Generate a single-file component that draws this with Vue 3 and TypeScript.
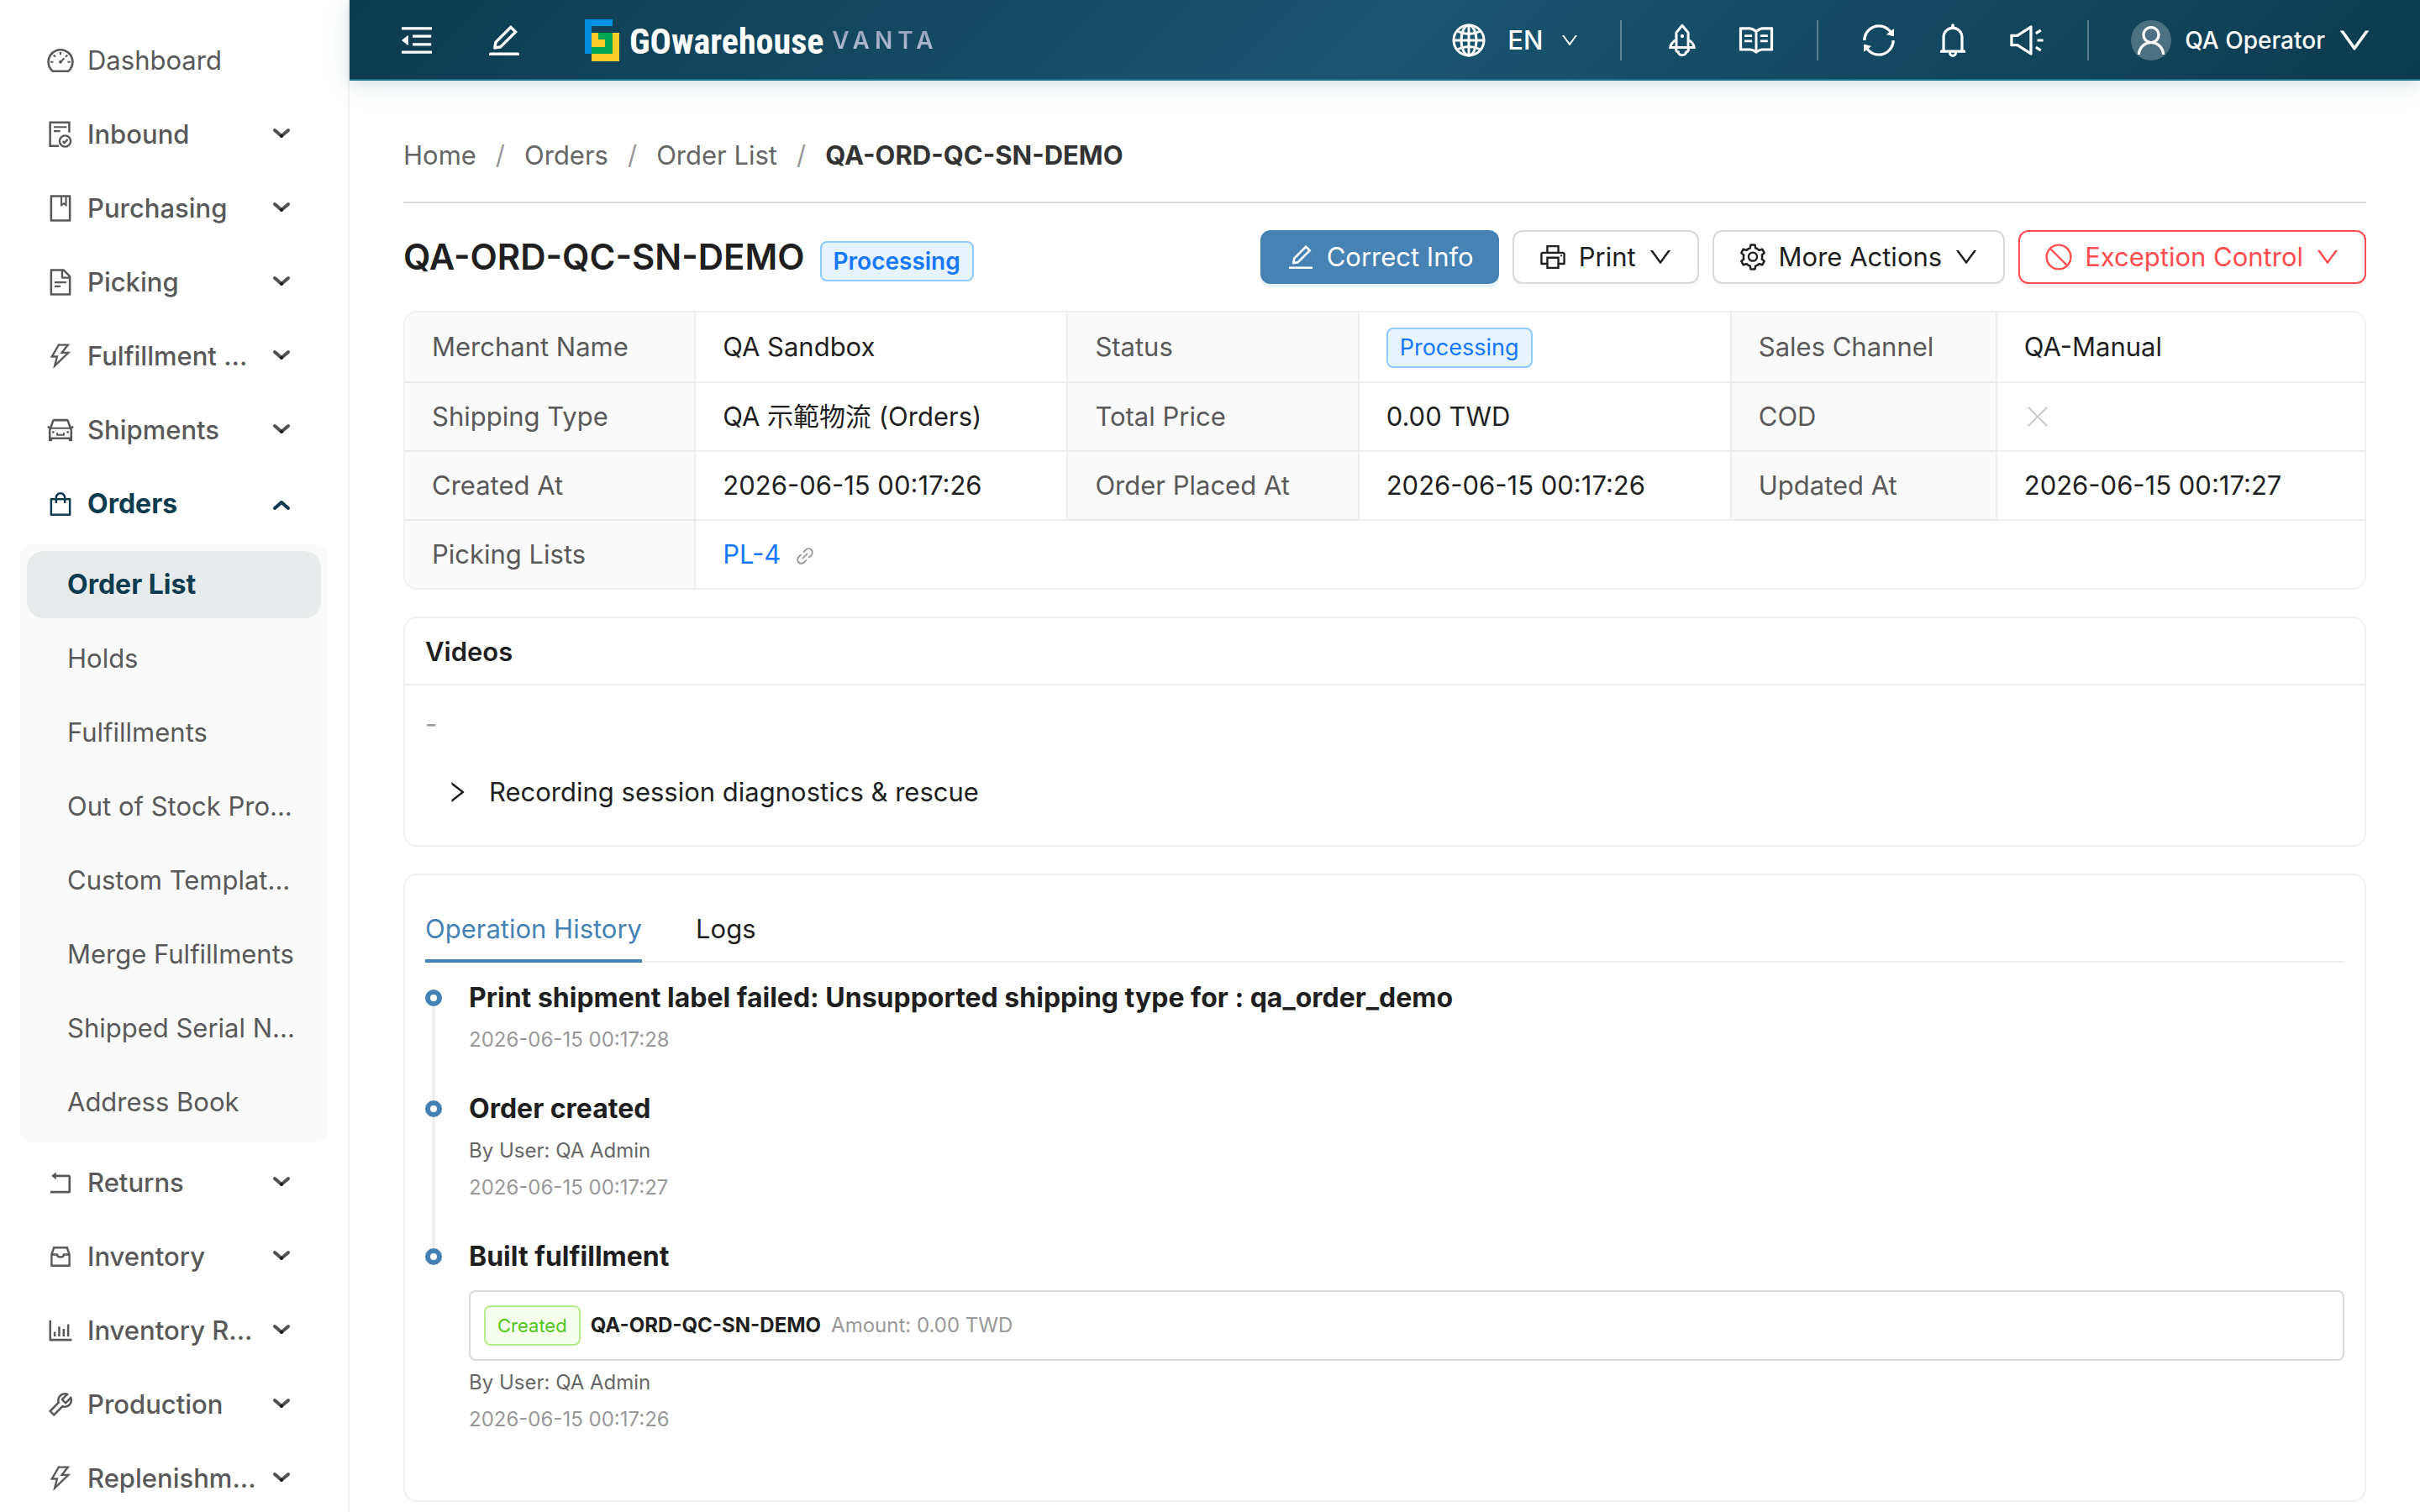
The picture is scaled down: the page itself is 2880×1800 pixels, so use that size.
<script setup lang="ts">
interface Glyph {
  fill?: string
  line?: string
}
interface MenuEntry {
  label: string
  icon: string
  children?: string[]
  leaf?: boolean
}
interface Field {
  label: string
  value: string
  kind?: 'tag' | 'cross' | 'link'
}
interface HistoryEntry {
  title: string
  user?: string
  time: string
  fulfillment?: { status: string; code: string; amount: string }
}

const glyphs: Record<string, Glyph> = {
  dashboard: { fill: 'M924.8 385.6a446.7 446.7 0 00-96-142.4 446.7 446.7 0 00-142.4-96C631.1 123.8 572.5 112 512 112s-119.1 11.8-174.4 35.2a446.7 446.7 0 00-142.4 96 446.7 446.7 0 00-96 142.4C75.8 440.9 64 499.5 64 560c0 132.7 58.3 257.7 159.9 343.1l1.7 1.4c5.8 4.8 13.1 7.5 20.6 7.5h531.7c7.5 0 14.8-2.7 20.6-7.5l1.7-1.4C901.7 817.7 960 692.7 960 560c0-60.5-11.9-119.1-35.2-174.4zM761.4 836H262.6A371.12 371.12 0 01140 560c0-99.4 38.7-192.8 109-263 70.3-70.3 163.7-109 263-109 99.4 0 192.8 38.7 263 109 70.3 70.3 109 163.7 109 263 0 105.6-44.5 205.5-122.6 276zM623.5 421.5a8.03 8.03 0 00-11.3 0L527.7 506c-18.7-5-39.4-.2-54.1 14.5a55.95 55.95 0 000 79.2 55.95 55.95 0 0079.2 0 55.87 55.87 0 0014.5-54.1l84.5-84.5c3.1-3.1 3.1-8.2 0-11.3l-28.3-28.3zM490 320h44c4.4 0 8-3.6 8-8v-80c0-4.4-3.6-8-8-8h-44c-4.4 0-8 3.6-8 8v80c0 4.4 3.6 8 8 8zm260 218v44c0 4.4 3.6 8 8 8h80c4.4 0 8-3.6 8-8v-44c0-4.4-3.6-8-8-8h-80c-4.4 0-8 3.6-8 8zm12.7-197.2l-31.1-31.1a8.03 8.03 0 00-11.3 0l-56.6 56.6a8.03 8.03 0 000 11.3l31.1 31.1c3.1 3.1 8.2 3.1 11.3 0l56.6-56.6c3.1-3.1 3.1-8.2 0-11.3zm-458.6-31.1a8.03 8.03 0 00-11.3 0l-31.1 31.1a8.03 8.03 0 000 11.3l56.6 56.6c3.1 3.1 8.2 3.1 11.3 0l31.1-31.1c3.1-3.1 3.1-8.2 0-11.3l-56.6-56.6zM262 530h-80c-4.4 0-8 3.6-8 8v44c0 4.4 3.6 8 8 8h80c4.4 0 8-3.6 8-8v-44c0-4.4-3.6-8-8-8z' },
  inbound: {
    fill: 'M282 232h440v62H282zM282 372h220v62H282zM124 71h720v380h-72V143H196v724h256v72H124z',
    line: 'M480 739a188 188 0 10376 0 188 188 0 10-376 0M588 742l56 56 112-118',
  },
  book: { fill: 'M832 64H192c-17.7 0-32 14.3-32 32v832c0 17.7 14.3 32 32 32h640c17.7 0 32-14.3 32-32V96c0-17.7-14.3-32-32-32zm-260 72h96v209.9L621.5 312 572 347.4V136zm220 752H232V136h280v296.9c0 3.3 1 6.6 3 9.3a15.9 15.9 0 0022.3 3.7l83.8-59.9 81.4 59.4c2.7 2 6 3.1 9.4 3.1 8.8 0 16-7.2 16-16V136h64v752z' },
  file: { fill: 'M854.6 288.6L639.4 73.4c-6-6-14.1-9.4-22.6-9.4H192c-17.7 0-32 14.3-32 32v832c0 17.7 14.3 32 32 32h640c17.7 0 32-14.3 32-32V311.3c0-8.5-3.4-16.7-9.4-22.7zM790.2 326H602V137.8L790.2 326zm1.8 562H232V136h302v216a42 42 0 0042 42h216v494zM504 618H320c-4.4 0-8 3.6-8 8v48c0 4.4 3.6 8 8 8h184c4.4 0 8-3.6 8-8v-48c0-4.4-3.6-8-8-8zM312 490v48c0 4.4 3.6 8 8 8h384c4.4 0 8-3.6 8-8v-48c0-4.4-3.6-8-8-8H320c-4.4 0-8 3.6-8 8z' },
  bolt: { fill: 'M848 359.3H627.7L825.8 109c4.1-5.3.4-13-6.3-13H436c-2.8 0-5.5 1.5-6.9 4L170 547.5c-3.1 5.3.7 12 6.9 12h174.4l-89.4 357.6c-1.9 7.8 7.5 13.3 13.3 7.7L853.5 373c5.2-4.9 1.7-13.7-5.5-13.7zM378.2 732.5l60.3-241H281.1l189.6-327.4h224.6L487 427.4h211L378.2 732.5z' },
  car: { fill: 'M380 704h264c4.4 0 8-3.6 8-8v-84c0-4.4-3.6-8-8-8h-40c-4.4 0-8 3.6-8 8v36H428v-36c0-4.4-3.6-8-8-8h-40c-4.4 0-8 3.6-8 8v84c0 4.4 3.6 8 8 8zm340-123a40 40 0 1080 0 40 40 0 10-80 0zm239-167.6L935.3 372a8 8 0 00-10.9-2.9l-50.7 29.6-78.3-216.2a63.9 63.9 0 00-60.9-44.4H301.2c-34.7 0-65.5 22.4-76.2 55.5l-74.6 205.2-50.8-29.6a8 8 0 00-10.9 2.9L65 413.4c-2.2 3.8-.9 8.6 2.9 10.8l60.4 35.2-14.5 40c-1.2 3.2-1.8 6.6-1.8 10v348.2c0 15.7 11.8 28.4 26.3 28.4h67.6c12.3 0 23-9.3 25.6-22.3l7.7-37.7h545.6l7.7 37.7c2.7 13 13.3 22.3 25.6 22.3h67.6c14.5 0 26.3-12.7 26.3-28.4V509.4c0-3.4-.6-6.8-1.8-10l-14.5-40 60.3-35.2a8 8 0 003-10.8zM840 517v237H184V517l15.6-43h624.8l15.6 43zM292.7 218.1l.5-1.3.4-1.3c1.1-3.3 4.1-5.5 7.6-5.5h427.6l75.4 208H220l72.7-199.9zM224 581a40 40 0 1080 0 40 40 0 10-80 0z' },
  bag: { fill: 'M832 312H696v-16c0-101.6-82.4-184-184-184s-184 82.4-184 184v16H192c-17.7 0-32 14.3-32 32v536c0 17.7 14.3 32 32 32h640c17.7 0 32-14.3 32-32V344c0-17.7-14.3-32-32-32zm-432-16c0-61.9 50.1-112 112-112s112 50.1 112 112v16H400v-16zm392 544H232V384h96v88c0 4.4 3.6 8 8 8h56c4.4 0 8-3.6 8-8v-88h224v88c0 4.4 3.6 8 8 8h56c4.4 0 8-3.6 8-8v-88h96v456z' },
  rollback: { fill: 'M793 242H366v-74c0-6.7-7.7-10.4-12.9-6.3l-142 112a8 8 0 000 12.6l142 112c5.2 4.1 12.9.4 12.9-6.3v-74h415v470H175c-4.4 0-8 3.6-8 8v60c0 4.4 3.6 8 8 8h618c35.3 0 64-28.7 64-64V306c0-35.3-28.7-64-64-64z' },
  tray: { line: 'M211 440L290 208H734L813 440V818H211ZM211 440H400C400 500 450 528 512 528S624 500 624 440H813' },
  chart: { fill: 'M888 792H200V168c0-4.4-3.6-8-8-8h-56c-4.4 0-8 3.6-8 8v688c0 4.4 3.6 8 8 8h752c4.4 0 8-3.6 8-8v-56c0-4.4-3.6-8-8-8zm-600-80h56c4.4 0 8-3.6 8-8V560c0-4.4-3.6-8-8-8h-56c-4.4 0-8 3.6-8 8v144c0 4.4 3.6 8 8 8zm152 0h56c4.4 0 8-3.6 8-8V384c0-4.4-3.6-8-8-8h-56c-4.4 0-8 3.6-8 8v320c0 4.4 3.6 8 8 8zm152 0h56c4.4 0 8-3.6 8-8V462c0-4.4-3.6-8-8-8h-56c-4.4 0-8 3.6-8 8v242c0 4.4 3.6 8 8 8zm152 0h56c4.4 0 8-3.6 8-8V304c0-4.4-3.6-8-8-8h-56c-4.4 0-8 3.6-8 8v400c0 4.4 3.6 8 8 8z' },
  tool: { fill: 'M876.6 239.5c-.5-.9-1.2-1.8-2-2.5-5-5-13.1-5-18.1 0L684.2 409.3l-67.9-67.9L788.7 169c.8-.8 1.4-1.6 2-2.5 3.6-6.1 1.6-13.9-4.5-17.5-98.2-58-226.8-44.7-311.3 39.7-67 67-89.2 162-66.5 247.4l-293 293c-3 3-2.8 7.9.3 11l169.7 169.7c3.1 3.1 8.1 3.3 11 .3l292.9-292.9c85.5 22.8 180.5.7 247.6-66.4 84.4-84.5 97.7-213.1 39.7-311.3zM786 499.8c-58.1 58.1-145.3 69.3-214.6 33.6l-8.8 8.8-.1-.1-274 274.1-79.2-79.2 230.1-230.1s0 .1.1.1l52.8-52.8c-35.7-69.3-24.5-156.5 33.6-214.6a184.2 184.2 0 01144-53.5L537 318.9a32.05 32.05 0 000 45.3l124.5 124.5a32.05 32.05 0 0045.3 0l132.8-132.8c3.7 51.8-14.4 104.8-53.6 143.9z' },
  fold: { fill: 'M408 442h480c4.4 0 8-3.6 8-8v-56c0-4.4-3.6-8-8-8H408c-4.4 0-8 3.6-8 8v56c0 4.4 3.6 8 8 8zm-8 204c0 4.4 3.6 8 8 8h480c4.4 0 8-3.6 8-8v-56c0-4.4-3.6-8-8-8H408c-4.4 0-8 3.6-8 8v56zm504-486H120c-4.4 0-8 3.6-8 8v56c0 4.4 3.6 8 8 8h784c4.4 0 8-3.6 8-8v-56c0-4.4-3.6-8-8-8zm0 632H120c-4.4 0-8 3.6-8 8v56c0 4.4 3.6 8 8 8h784c4.4 0 8-3.6 8-8v-56c0-4.4-3.6-8-8-8zM115.4 518.9L271.7 642c5.8 4.6 14.4.5 14.4-6.9V388.9c0-7.4-8.5-11.5-14.4-6.9L115.4 505.1a8.74 8.74 0 000 13.8z' },
  edit: { fill: 'M257.7 752c2 0 4-.2 6-.5L431.9 722c2-.4 3.9-1.3 5.3-2.8l423.9-423.9a9.96 9.96 0 000-14.1L694.9 114.9c-1.9-1.9-4.4-2.9-7.1-2.9s-5.2 1-7.1 2.9L256.8 538.8c-1.5 1.5-2.4 3.3-2.8 5.3l-29.5 168.2a33.5 33.5 0 009.4 29.8c6.6 6.4 14.9 9.9 23.8 9.9zm67.4-174.4L687.8 215l73.3 73.3-362.7 362.6-88.9 15.7 15.6-89zM880 836H144c-17.7 0-32 14.3-32 32v36c0 4.4 3.6 8 8 8h784c4.4 0 8-3.6 8-8v-36c0-17.7-14.3-32-32-32z' },
  down: { fill: 'M884 256h-75c-5.1 0-9.9 2.5-12.9 6.6L512 654.2 227.9 262.6c-3-4.1-7.8-6.6-12.9-6.6h-75c-6.5 0-10.3 7.4-6.5 12.7l352.6 486.1c12.8 17.6 39 17.6 51.7 0l352.6-486.1c3.9-5.3.1-12.7-6.4-12.7z' },
  right: { fill: 'M765.7 486.8L314.9 134.7A7.97 7.97 0 00302 141v77.3c0 4.9 2.3 9.6 6.1 12.6l360 281.1-360 281.1c-3.9 3-6.1 7.7-6.1 12.6V883c0 6.7 7.7 10.4 12.9 6.3l450.8-352.1a31.96 31.96 0 000-50.4z' },
  rocket: { fill: 'M864 736c0-111.6-65.4-208-160-252.9V317.3c0-15.1-5.3-29.7-15.1-41.2L536.5 95.4C530.1 87.8 521 84 512 84s-18.1 3.8-24.5 11.4L335.1 276.1a63.97 63.97 0 00-15.1 41.2v165.8C225.4 528 160 624.4 160 736h156.5c-2.3 7.2-3.5 15-3.5 23.8 0 22.1 7.6 43.7 21.4 60.8a97.2 97.2 0 0043.1 30.6c23.1 54 75.6 88.8 134.5 88.8 29.1 0 57.3-8.6 81.4-24.8 23.6-15.8 41.9-37.9 53-64a97 97 0 0043.1-30.5 97.52 97.52 0 0021.4-60.8c0-8.4-1.1-16.4-3.1-23.8H864zM762.3 621.4c9.4 14.6 17 30.3 22.5 46.6H700V558.7a211.6 211.6 0 0162.3 62.7zM388 483.1V318.8l124-147 124 147V668H388V483.1zM239.2 668c5.5-16.3 13.1-32 22.5-46.6 16.3-25.2 37.5-46.5 62.3-62.7V668h-84.8zm388.9 116.2c-5.2 3-11.2 4.2-17.1 3.4l-19.5-2.4-2.8 19.4c-5.4 37.9-38.4 66.5-76.7 66.5-38.3 0-71.3-28.6-76.7-66.5l-2.8-19.5-19.5 2.5a27.7 27.7 0 01-17.1-3.5c-8.7-5-14.1-14.3-14.1-24.4 0-10.6 5.9-19.4 14.6-23.8h231.3c8.8 4.5 14.6 13.3 14.6 23.8-.1 10.2-5.5 19.6-14.2 24.5zM464 400a48 48 0 1096 0 48 48 0 10-96 0z' },
  read: { fill: 'M928 161H699.2c-49.1 0-97.1 14.1-138.4 40.7L512 233l-48.8-31.3A255.2 255.2 0 00324.8 161H96c-17.7 0-32 14.3-32 32v568c0 17.7 14.3 32 32 32h228.8c49.1 0 97.1 14.1 138.4 40.7l44.4 28.6c1.3.8 2.8 1.3 4.3 1.3s3-.4 4.3-1.3l44.4-28.6C602 807.1 650.1 793 699.2 793H928c17.7 0 32-14.3 32-32V193c0-17.7-14.3-32-32-32zM324.8 721H136V233h188.8c35.4 0 69.8 10.1 99.5 29.2l48.8 31.3 6.9 4.5v462c-47.6-25.6-100.8-39-155.2-39zm563.2 0H699.2c-54.4 0-107.6 13.4-155.2 39V298l6.9-4.5 48.8-31.3c29.7-19.1 64.1-29.2 99.5-29.2H888v488zM396.9 361H211.1c-3.9 0-7.1 3.4-7.1 7.5v45c0 4.1 3.2 7.5 7.1 7.5h185.7c3.9 0 7.1-3.4 7.1-7.5v-45c.1-4.1-3.1-7.5-7-7.5zm223.1 7.5v45c0 4.1 3.2 7.5 7.1 7.5h185.7c3.9 0 7.1-3.4 7.1-7.5v-45c0-4.1-3.2-7.5-7.1-7.5H627.1c-3.9 0-7.1 3.4-7.1 7.5zM396.9 501H211.1c-3.9 0-7.1 3.4-7.1 7.5v45c0 4.1 3.2 7.5 7.1 7.5h185.7c3.9 0 7.1-3.4 7.1-7.5v-45c.1-4.1-3.1-7.5-7-7.5zm416 0H627.1c-3.9 0-7.1 3.4-7.1 7.5v45c0 4.1 3.2 7.5 7.1 7.5h185.7c3.9 0 7.1-3.4 7.1-7.5v-45c.1-4.1-3.1-7.5-7-7.5z' },
  sync: { fill: 'M168 504.2c1-43.7 10-86.1 26.9-126 17.3-41 42.1-77.7 73.7-109.4S337 212.3 378 195c42.4-17.9 87.4-27 133.9-27s91.5 9.1 133.8 27A341.5 341.5 0 01755 268.8c9.9 9.9 19.2 20.4 27.8 31.4l-60.2 47a8 8 0 003 14.1l175.7 43c5 1.2 9.9-2.6 9.9-7.7l.8-180.9c0-6.7-7.7-10.5-12.9-6.3l-56.4 44.1C765.8 155.1 646.2 92 511.8 92 282.7 92 96.3 275.6 92 503.8a8 8 0 008 8.2h60c4.4 0 7.9-3.5 8-7.8zm756 7.8h-60c-4.4 0-7.9 3.5-8 7.8-1 43.7-10 86.1-26.9 126-17.3 41-42.1 77.8-73.7 109.4A342.45 342.45 0 01512.1 856a342.24 342.24 0 01-243.2-100.8c-9.9-9.9-19.2-20.4-27.8-31.4l60.2-47a8 8 0 00-3-14.1l-175.7-43c-5-1.2-9.9 2.6-9.9 7.7l-.7 181c0 6.7 7.7 10.5 12.9 6.3l56.4-44.1C258.2 868.9 377.8 932 512.2 932c229.2 0 415.5-183.7 419.8-411.8a8 8 0 00-8-8.2z' },
  bell: { fill: 'M816 768h-24V428c0-141.1-104.3-257.7-240-277.1V112c0-22.1-17.9-40-40-40s-40 17.9-40 40v38.9c-135.7 19.4-240 136-240 277.1v340h-24c-17.7 0-32 14.3-32 32v32c0 4.4 3.6 8 8 8h216c0 61.8 50.2 112 112 112s112-50.2 112-112h216c4.4 0 8-3.6 8-8v-32c0-17.7-14.3-32-32-32zM512 888c-26.5 0-48-21.5-48-48h96c0 26.5-21.5 48-48 48zM304 768V428c0-55.6 21.6-107.8 60.9-147.1S456.4 220 512 220c55.6 0 107.8 21.6 147.1 60.9S720 372.4 720 428v340H304z' },
  sound: { fill: 'M625.9 115c-5.9 0-11.9 1.6-17.4 5.3L254 352H90c-8.8 0-16 7.2-16 16v288c0 8.8 7.2 16 16 16h164l354.5 231.7c5.5 3.6 11.6 5.3 17.4 5.3 16.7 0 32.1-13.3 32.1-32.1V147.1c0-18.8-15.4-32.1-32.1-32.1zM586 803L293.4 611.7l-18-11.7H146V424h129.4l17.9-11.7L586 221v582zm348-327H806c-8.8 0-16 7.2-16 16v40c0 8.8 7.2 16 16 16h128c8.8 0 16-7.2 16-16v-40c0-8.8-7.2-16-16-16zm-41.9 261.8l-110.3-63.7a15.9 15.9 0 00-21.7 5.9l-19.9 34.5c-4.4 7.6-1.8 17.4 5.8 21.8L856.3 800a15.9 15.9 0 0021.7-5.9l19.9-34.5c4.4-7.6 1.7-17.4-5.8-21.8zM760 344a15.9 15.9 0 0021.7 5.9L892 286.2c7.6-4.4 10.2-14.2 5.8-21.8L878 230a15.9 15.9 0 00-21.7-5.9L746 287.8a15.99 15.99 0 00-5.8 21.8L760 344z' },
  user: { fill: 'M858.5 763.6a374 374 0 00-80.6-119.5 375.63 375.63 0 00-119.5-80.6c-.4-.2-.8-.3-1.2-.5C719.5 518 760 444.7 760 362c0-137-111-248-248-248S264 225 264 362c0 82.7 40.5 156 102.8 201.1-.4.2-.8.3-1.2.5-44.8 18.9-85 46-119.5 80.6a375.63 375.63 0 00-80.6 119.5A371.7 371.7 0 00136 901.8a8 8 0 008 8.2h60c4.4 0 7.9-3.5 8-7.8 2-77.2 33-149.5 87.8-204.3 56.7-56.7 132-87.9 212.2-87.9s155.5 31.2 212.2 87.9C779 752.7 810 825 812 902.2c.1 4.4 3.6 7.8 8 7.8h60a8 8 0 008-8.2c-1-47.8-10.9-94.3-29.5-138.2zM512 534c-45.9 0-89.1-17.9-121.6-50.4S340 407.9 340 362c0-45.9 17.9-89.1 50.4-121.6S466.1 190 512 190s89.1 17.9 121.6 50.4S684 316.1 684 362c0 45.9-17.9 89.1-50.4 121.6S557.9 534 512 534z' },
  printer: { fill: 'M820 436h-40c-4.4 0-8 3.6-8 8v40c0 4.4 3.6 8 8 8h40c4.4 0 8-3.6 8-8v-40c0-4.4-3.6-8-8-8zm32-104H732V120c0-4.4-3.6-8-8-8H300c-4.4 0-8 3.6-8 8v212H172c-44.2 0-80 35.8-80 80v328c0 17.7 14.3 32 32 32h168v132c0 4.4 3.6 8 8 8h424c4.4 0 8-3.6 8-8V772h168c17.7 0 32-14.3 32-32V412c0-44.2-35.8-80-80-80zM360 180h304v152H360V180zm304 664H360V568h304v276zm200-140H732V500H292v204H160V412c0-6.6 5.4-12 12-12h680c6.6 0 12 5.4 12 12v292z' },
  setting: { fill: 'M924.8 625.7l-65.5-56c3.1-19 4.7-38.4 4.7-57.8s-1.6-38.8-4.7-57.8l65.5-56a32.03 32.03 0 009.3-35.2l-.9-2.6a443.74 443.74 0 00-79.7-137.9l-1.8-2.1a32.12 32.12 0 00-35.1-9.5l-81.3 28.9c-30-24.6-63.5-44-99.7-57.6l-15.7-85a32.05 32.05 0 00-25.8-25.7l-2.7-.5c-52.1-9.4-106.9-9.4-159 0l-2.7.5a32.05 32.05 0 00-25.8 25.7l-15.8 85.4a351.86 351.86 0 00-99 57.4l-81.9-29.1a32 32 0 00-35.1 9.5l-1.8 2.1a446.02 446.02 0 00-79.7 137.9l-.9 2.6c-4.5 12.5-.8 26.5 9.3 35.2l66.3 56.6c-3.1 18.8-4.6 38-4.6 57.1 0 19.2 1.5 38.4 4.6 57.1L99 625.5a32.03 32.03 0 00-9.3 35.2l.9 2.6c18.1 50.4 44.9 96.9 79.7 137.9l1.8 2.1a32.12 32.12 0 0035.1 9.5l81.9-29.1c29.8 24.5 63.1 43.9 99 57.4l15.8 85.4a32.05 32.05 0 0025.8 25.7l2.7.5a449.4 449.4 0 00159 0l2.7-.5a32.05 32.05 0 0025.8-25.7l15.7-85a350 350 0 0099.7-57.6l81.3 28.9a32 32 0 0035.1-9.5l1.8-2.1c34.8-41.1 61.6-87.5 79.7-137.9l.9-2.6c4.5-12.3.8-26.3-9.3-35zM788.3 465.9c2.5 15.1 3.8 30.6 3.8 46.1s-1.3 31-3.8 46.1l-6.6 40.1 74.7 63.9a370.03 370.03 0 01-42.6 73.6L721 702.8l-31.4 25.8c-23.9 19.6-50.5 35-79.3 45.8l-38.1 14.3-17.9 97a377.5 377.5 0 01-85 0l-17.9-97.2-37.8-14.5c-28.5-10.8-55-26.2-78.7-45.7l-31.4-25.9-93.4 33.2c-17-22.9-31.2-47.6-42.6-73.6l75.5-64.5-6.5-40c-2.4-14.9-3.7-30.3-3.7-45.5 0-15.3 1.2-30.6 3.7-45.5l6.5-40-75.5-64.5c11.3-26.1 25.6-50.7 42.6-73.6l93.4 33.2 31.4-25.9c23.7-19.5 50.2-34.9 78.7-45.7l37.9-14.3 17.9-97.2c28.1-3.2 56.8-3.2 85 0l17.9 97 38.1 14.3c28.7 10.8 55.4 26.2 79.3 45.8l31.4 25.8 92.8-32.9c17 22.9 31.2 47.6 42.6 73.6L781.8 426l6.5 39.9zM512 326c-97.2 0-176 78.8-176 176s78.8 176 176 176 176-78.8 176-176-78.8-176-176-176zm79.2 255.2A111.6 111.6 0 01512 614c-29.9 0-58-11.7-79.2-32.8A111.6 111.6 0 01400 502c0-29.9 11.7-58 32.8-79.2C454 401.6 482.1 390 512 390c29.9 0 58 11.6 79.2 32.8A111.6 111.6 0 01624 502c0 29.9-11.7 58-32.8 79.2z' },
  stop: { line: 'M102 512a410 410 0 10820 0 410 410 0 10-820 0M228 228L796 796' },
  link: { fill: 'M574 665.4a8.03 8.03 0 00-11.3 0L446.5 781.6c-53.8 53.8-144.6 59.5-204 0-59.5-59.5-53.8-150.2 0-204l116.2-116.2c3.1-3.1 3.1-8.2 0-11.3l-39.8-39.8a8.03 8.03 0 00-11.3 0L191.4 526.5c-84.6 84.6-84.6 221.5 0 306s221.5 84.6 306 0l116.2-116.2c3.1-3.1 3.1-8.2 0-11.3L574 665.4zm258.6-474c-84.6-84.6-221.5-84.6-306 0L410.3 307.6a8.03 8.03 0 000 11.3l39.7 39.7c3.1 3.1 8.2 3.1 11.3 0l116.2-116.2c53.8-53.8 144.6-59.5 204 0 59.5 59.5 53.8 150.2 0 204L665.3 562.6a8.03 8.03 0 000 11.3l39.8 39.8c3.1 3.1 8.2 3.1 11.3 0l116.2-116.2c84.5-84.6 84.5-221.5 0-306.1zM610.1 372.3a8.03 8.03 0 00-11.3 0L372.3 598.7a8.03 8.03 0 000 11.3l39.6 39.6c3.1 3.1 8.2 3.1 11.3 0l226.4-226.4c3.1-3.1 3.1-8.2 0-11.3l-39.5-39.6z' },
  cross: { line: 'M150 150L874 874M874 150L150 874' },
}

const menu: MenuEntry[] = [
  { label: 'Dashboard', icon: 'dashboard', leaf: true },
  { label: 'Inbound', icon: 'inbound' },
  { label: 'Purchasing', icon: 'book' },
  { label: 'Picking', icon: 'file' },
  { label: 'Fulfillment ...', icon: 'bolt' },
  { label: 'Shipments', icon: 'car' },
  {
    label: 'Orders',
    icon: 'bag',
    children: [
      'Order List',
      'Holds',
      'Fulfillments',
      'Out of Stock Pro...',
      'Custom Templat...',
      'Merge Fulfillments',
      'Shipped Serial N...',
      'Address Book',
    ],
  },
  { label: 'Returns', icon: 'rollback' },
  { label: 'Inventory', icon: 'tray' },
  { label: 'Inventory R...', icon: 'chart' },
  { label: 'Production', icon: 'tool' },
  { label: 'Replenishm...', icon: 'bolt' },
]

const crumbs: string[] = ['Home', 'Orders', 'Order List']

const rows: Field[][] = [
  [
    { label: 'Merchant Name', value: 'QA Sandbox' },
    { label: 'Status', value: 'Processing', kind: 'tag' },
    { label: 'Sales Channel', value: 'QA-Manual' },
  ],
  [
    { label: 'Shipping Type', value: 'QA 示範物流 (Orders)' },
    { label: 'Total Price', value: '0.00 TWD' },
    { label: 'COD', value: '', kind: 'cross' },
  ],
  [
    { label: 'Created At', value: '2026-06-15 00:17:26' },
    { label: 'Order Placed At', value: '2026-06-15 00:17:26' },
    { label: 'Updated At', value: '2026-06-15 00:17:27' },
  ],
  [{ label: 'Picking Lists', value: 'PL-4', kind: 'link' }],
]

const history: HistoryEntry[] = [
  {
    title: 'Print shipment label failed: Unsupported shipping type for : qa_order_demo',
    time: '2026-06-15 00:17:28',
  },
  { title: 'Order created', user: 'By User: QA Admin', time: '2026-06-15 00:17:27' },
  {
    title: 'Built fulfillment',
    user: 'By User: QA Admin',
    time: '2026-06-15 00:17:26',
    fulfillment: { status: 'Created', code: 'QA-ORD-QC-SN-DEMO', amount: 'Amount: 0.00 TWD' },
  },
]
</script>

<template>
  <div class="layout">
    <nav class="sidebar" aria-label="Main menu">
      <template v-for="entry in menu" :key="entry.label">
        <button
          type="button"
          class="menu-item"
          :class="{ leaf: entry.leaf, open: entry.children }"
          :aria-expanded="entry.leaf ? undefined : !!entry.children"
        >
          <svg class="icon menu-icon" viewBox="0 0 1024 1024" aria-hidden="true">
            <path v-if="glyphs[entry.icon].fill" :d="glyphs[entry.icon].fill" />
            <path v-if="glyphs[entry.icon].line" class="line" :d="glyphs[entry.icon].line" />
          </svg>
          <span class="menu-label">{{ entry.label }}</span>
          <svg v-if="!entry.leaf" class="caret" viewBox="0 0 24 16" aria-hidden="true">
            <path d="M4 3L12 10" />
            <path d="M12 10L20 3" />
          </svg>
        </button>
        <div v-if="entry.children" class="submenu">
          <a
            v-for="(child, i) in entry.children"
            :key="child"
            href="#"
            class="submenu-item"
            :class="{ selected: i === 0 }"
            >{{ child }}</a
          >
        </div>
      </template>
    </nav>

    <div class="body">
      <header class="topbar">
        <div class="topbar-left">
          <button type="button" class="tool wide" aria-label="Collapse menu">
            <svg class="icon" viewBox="0 0 1024 1024"><path :d="glyphs.fold.fill" /></svg>
          </button>
          <button type="button" class="tool wide" aria-label="Edit menu">
            <svg class="icon" viewBox="0 0 1024 1024"><path :d="glyphs.edit.fill" /></svg>
          </button>
          <a href="#" class="brand">
            <svg class="brand-mark" viewBox="0 0 41 50" aria-hidden="true">
              <path fill="#0090df" d="M0 0H33V8H8V41H0Z" />
              <path fill="#ffcd2a" d="M8 16H41V50H8Z" />
              <path fill="#00a651" d="M16 16H33V41H8V33H24V24H16Z" />
            </svg>
            <span class="brand-name">GOwarehouse</span>
            <span class="brand-edition">VANTA</span>
          </a>
        </div>
        <div class="topbar-right">
          <button type="button" class="language">
            <svg class="globe" viewBox="0 0 40 40" aria-hidden="true">
              <circle cx="20" cy="20" r="18" />
              <ellipse cx="20" cy="20" rx="9" ry="18" />
              <path d="M20 2V38M2 20H38M6 9Q20 16 34 9M6 31Q20 24 34 31" />
            </svg>
            <span>EN</span>
            <svg class="icon" viewBox="0 0 1024 1024" aria-hidden="true"><path :d="glyphs.down.fill" /></svg>
          </button>
          <span class="divider"></span>
          <button type="button" class="tool" aria-label="What's new">
            <svg class="icon" viewBox="0 0 1024 1024"><path :d="glyphs.rocket.fill" /></svg>
          </button>
          <button type="button" class="tool" aria-label="Documentation">
            <svg class="icon" viewBox="0 0 1024 1024"><path :d="glyphs.read.fill" /></svg>
          </button>
          <span class="divider"></span>
          <button type="button" class="tool" aria-label="Refresh">
            <svg class="icon" viewBox="0 0 1024 1024"><path :d="glyphs.sync.fill" /></svg>
          </button>
          <button type="button" class="tool" aria-label="Notifications">
            <svg class="icon" viewBox="0 0 1024 1024"><path :d="glyphs.bell.fill" /></svg>
          </button>
          <button type="button" class="tool" aria-label="Announcements">
            <svg class="icon" viewBox="0 0 1024 1024"><path :d="glyphs.sound.fill" /></svg>
          </button>
          <span class="divider"></span>
          <button type="button" class="account">
            <span class="avatar">
              <svg class="icon" viewBox="0 0 1024 1024" aria-hidden="true"><path :d="glyphs.user.fill" /></svg>
            </span>
            <span>QA Operator</span>
            <svg class="icon account-caret" viewBox="0 0 1024 1024" aria-hidden="true">
              <path :d="glyphs.down.fill" />
            </svg>
          </button>
        </div>
      </header>

      <main class="content">
        <nav class="breadcrumb" aria-label="Breadcrumb">
          <template v-for="crumb in crumbs" :key="crumb">
            <a href="#">{{ crumb }}</a>
            <span class="slash">/</span>
          </template>
          <span class="current">QA-ORD-QC-SN-DEMO</span>
        </nav>

        <div class="heading">
          <div class="heading-title">
            <h1>QA-ORD-QC-SN-DEMO</h1>
            <span class="tag strong">Processing</span>
          </div>
          <div class="actions">
            <button type="button" class="btn primary">
              <svg class="icon" viewBox="0 0 1024 1024" aria-hidden="true"><path :d="glyphs.edit.fill" /></svg>
              <span>Correct Info</span>
            </button>
            <button type="button" class="btn">
              <svg class="icon" viewBox="0 0 1024 1024" aria-hidden="true"><path :d="glyphs.printer.fill" /></svg>
              <span>Print</span>
              <svg class="icon btn-caret" viewBox="0 0 1024 1024" aria-hidden="true"><path :d="glyphs.down.fill" /></svg>
            </button>
            <button type="button" class="btn">
              <svg class="icon" viewBox="0 0 1024 1024" aria-hidden="true"><path :d="glyphs.setting.fill" /></svg>
              <span>More Actions</span>
              <svg class="icon btn-caret" viewBox="0 0 1024 1024" aria-hidden="true"><path :d="glyphs.down.fill" /></svg>
            </button>
            <button type="button" class="btn danger">
              <svg class="icon" viewBox="0 0 1024 1024" aria-hidden="true"><path class="line" :d="glyphs.stop.line" /></svg>
              <span>Exception Control</span>
              <svg class="icon btn-caret" viewBox="0 0 1024 1024" aria-hidden="true"><path :d="glyphs.down.fill" /></svg>
            </button>
          </div>
        </div>

        <div class="details">
          <table>
            <colgroup>
              <col class="c-label" />
              <col class="c-value" />
              <col class="c-label" />
              <col class="c-value" />
              <col class="c-label-last" />
              <col />
            </colgroup>
            <tbody>
              <tr v-for="(row, r) in rows" :key="r">
                <template v-for="field in row" :key="field.label">
                  <th scope="row">{{ field.label }}</th>
                  <td :colspan="row.length === 1 ? 5 : 1">
                    <span v-if="field.kind === 'tag'" class="tag">{{ field.value }}</span>
                    <svg v-else-if="field.kind === 'cross'" class="icon cross" viewBox="0 0 1024 1024" role="img" aria-label="No">
                      <path class="line" :d="glyphs.cross.line" />
                    </svg>
                    <span v-else-if="field.kind === 'link'" class="picking">
                      <a href="#">{{ field.value }}</a>
                      <svg class="icon link-icon" viewBox="0 0 1024 1024" aria-hidden="true"><path :d="glyphs.link.fill" /></svg>
                    </span>
                    <template v-else>{{ field.value }}</template>
                  </td>
                </template>
              </tr>
            </tbody>
          </table>
        </div>

        <section class="card">
          <h2>Videos</h2>
          <div class="videos-body">
            <p class="empty">-</p>
            <button type="button" class="collapse" aria-expanded="false">
              <svg class="icon" viewBox="0 0 1024 1024" aria-hidden="true"><path :d="glyphs.right.fill" /></svg>
              <span>Recording session diagnostics &amp; rescue</span>
            </button>
          </div>
        </section>

        <section class="card history">
          <div class="tabs" role="tablist">
            <button type="button" role="tab" aria-selected="true" class="tab active">Operation History</button>
            <button type="button" role="tab" aria-selected="false" class="tab">Logs</button>
          </div>
          <ol class="timeline">
            <li v-for="entry in history" :key="entry.time">
              <div class="rail"><span class="dot"></span><span class="tail"></span></div>
              <div class="entry">
                <h3>{{ entry.title }}</h3>
                <div v-if="entry.fulfillment" class="fulfillment">
                  <span class="tag created">{{ entry.fulfillment.status }}</span>
                  <strong>{{ entry.fulfillment.code }}</strong>
                  <span class="amount">{{ entry.fulfillment.amount }}</span>
                </div>
                <p v-if="entry.user" class="by">{{ entry.user }}</p>
                <p class="time">{{ entry.time }}</p>
              </div>
            </li>
          </ol>
        </section>
      </main>
    </div>
  </div>
</template>

<style>
body {
  margin: 0;
  background: #fff;
}
</style>

<style scoped>
.layout {
  display: flex;
  min-height: 100vh;
  background: #fff;
  color: #1f1f1f;
  font-family: Inter, "Noto Sans CJK TC", sans-serif;
  font-size: 31px;
  line-height: 50px;
}
.layout * {
  box-sizing: border-box;
}
button {
  margin: 0;
  padding: 0;
  border: 0;
  background: none;
  color: inherit;
  font: inherit;
  text-align: left;
}
a {
  color: inherit;
  text-decoration: none;
}
h1,
h2,
h3,
p {
  margin: 0;
}
.icon {
  flex: none;
  display: block;
  width: 36px;
  height: 36px;
  fill: currentColor;
}
.line {
  fill: none;
  stroke: currentColor;
  stroke-width: 68;
}

/* Sidebar */
.sidebar {
  flex: none;
  display: flex;
  flex-direction: column;
  gap: 8px;
  width: 416px;
  padding: 32px 24px 0;
  border-right: 2px solid #f0f0f0;
  box-sizing: border-box;
  color: #595959;
}
.menu-item {
  display: flex;
  align-items: center;
  height: 80px;
  padding: 0 43px 0 30px;
  font-weight: 500;
}
.menu-item.leaf {
  font-weight: 400;
}
.menu-item.open {
  color: #0d3b4f;
  font-size: 32px;
  font-weight: 700;
}
.menu-label {
  flex: 1;
  margin-left: 14px;
  white-space: nowrap;
}
.caret {
  flex: none;
  width: 24px;
  height: 16px;
  fill: none;
  stroke: rgba(0, 0, 0, 0.68);
  stroke-width: 4;
  stroke-linecap: round;
}
.open .caret {
  stroke: #0d3b4f;
  transform: rotate(180deg);
}
.submenu {
  display: flex;
  flex-direction: column;
  gap: 8px;
  padding: 8px;
  border-radius: 16px;
  background: #fafafa;
}
.submenu-item {
  height: 80px;
  padding-left: 48px;
  border-radius: 20px;
  line-height: 80px;
  white-space: nowrap;
}
.submenu-item.selected {
  background: #e7ebec;
  color: #0d3b4f;
  font-size: 32px;
  font-weight: 700;
}

/* Top bar */
.body {
  flex: 1;
  min-width: 0;
}
.topbar {
  position: relative;
  display: flex;
  align-items: center;
  justify-content: space-between;
  height: 96px;
  padding: 2px 55px 0 28px;
  border-bottom: 2px solid #1a7089;
  background: linear-gradient(135deg, #0d3b4f 0%, #1a5470 50%, #0d3b4f 100%);
  box-shadow: 0 4px 16px rgba(13, 59, 79, 0.1), 0 4px 40px rgba(13, 100, 110, 0.09);
  color: #fff;
}
.topbar-left,
.topbar-right {
  display: flex;
  align-items: center;
}
.tool {
  display: flex;
  align-items: center;
  justify-content: center;
  width: 88px;
  height: 88px;
}
.tool.wide {
  width: 104px;
}
.tool .icon {
  width: 46px;
  height: 46px;
}
.brand {
  display: flex;
  align-items: center;
  margin-left: 44px;
}
.brand-mark {
  width: 41px;
  height: 50px;
}
.brand-name {
  margin-left: 12px;
  padding-top: 4px;
  font-family: "Roboto Condensed", "Liberation Sans Narrow", Roboto, sans-serif;
  font-size: 42px;
  font-weight: 700;
}
.brand-edition {
  margin-left: 10px;
  background: linear-gradient(180deg, #8795ad, #c3cbe0);
  background-clip: text;
  color: transparent;
  font-size: 28px;
  font-weight: 600;
  letter-spacing: 6px;
}
.divider {
  width: 2px;
  height: 48px;
  margin: 0 28px;
  background: rgba(255, 255, 255, 0.3);
}
.language {
  display: flex;
  align-items: center;
  margin-right: 20px;
  font-weight: 500;
}
.language .icon {
  width: 24px;
  height: 24px;
  margin-left: 20px;
}
.globe {
  width: 40px;
  height: 40px;
  margin-right: 26px;
  fill: none;
  stroke: currentColor;
  stroke-width: 3;
}
.account {
  display: flex;
  align-items: center;
  margin-left: 22px;
  font-size: 28px;
  font-weight: 500;
}
.avatar {
  display: flex;
  align-items: center;
  justify-content: center;
  width: 48px;
  height: 48px;
  margin-right: 16px;
  border-radius: 50%;
  background: rgba(255, 255, 255, 0.25);
}
.avatar .icon {
  width: 44px;
  height: 44px;
}
.account-caret {
  width: 46px;
  height: 46px;
  margin-left: 12px;
}

/* Content */
.content {
  padding: 64px 64px 12px;
}
.breadcrumb {
  display: flex;
  padding-bottom: 30px;
  border-bottom: 2px solid #d9d9d9;
  color: #666;
}
.slash {
  margin: 0 23px;
  color: #999;
}
.current {
  color: #333;
  font-weight: 700;
}
.heading {
  display: flex;
  align-items: center;
  justify-content: space-between;
  margin: 32px 0;
}
.heading-title {
  display: flex;
  align-items: baseline;
  gap: 18px;
}
h1 {
  font-size: 42px;
  font-weight: 600;
  line-height: 64px;
}
.tag {
  display: inline-block;
  padding: 0 14px;
  border: 2px solid #91caff;
  border-radius: 8px;
  background: #e6f4ff;
  color: #1677ff;
  font-size: 27px;
  line-height: 44px;
  white-space: nowrap;
}
.tag.strong {
  font-size: 28px;
  font-weight: 600;
}
.actions {
  display: flex;
  gap: 16px;
}
.btn {
  display: flex;
  align-items: center;
  gap: 13px;
  height: 64px;
  padding: 0 28px;
  border: 2px solid #d9d9d9;
  border-radius: 12px;
  background: #fff;
  box-shadow: 0 4px 0 rgba(0, 0, 0, 0.02);
  white-space: nowrap;
}
.btn.primary {
  border-color: #4682b4;
  background: #4682b4;
  box-shadow: 0 4px 0 rgba(5, 145, 175, 0.1);
  color: #fff;
}
.btn.danger {
  border-color: #ff4d4f;
  box-shadow: 0 4px 0 rgba(255, 38, 5, 0.06);
  color: #ff4d4f;
}
.btn-caret {
  width: 32px;
  height: 32px;
}

/* Order details */
.details {
  overflow: hidden;
  border: 2px solid #f0f0f0;
  border-radius: 16px;
}
table {
  width: 100%;
  table-layout: fixed;
  border-collapse: separate;
  border-spacing: 0;
}
.c-label {
  width: 14.85%;
}
.c-value {
  width: 19%;
}
.c-label-last {
  width: 13.55%;
}
th,
td {
  height: 82px;
  padding: 0 32px;
  border-right: 2px solid #ededed;
  border-bottom: 2px solid #f0f0f0;
  text-align: left;
  line-height: 48px;
}
th {
  border-bottom-color: #ebebeb;
  background: #fafafa;
  color: #595959;
  font-weight: 400;
}
td:last-child {
  border-right: 0;
}
tr:first-child > * {
  height: 84px;
}
tr:last-child > * {
  height: 80px;
  border-bottom: 0;
}
td .tag {
  vertical-align: middle;
}
.cross {
  width: 32px;
  height: 32px;
  color: #ccc;
}
.picking {
  display: flex;
  align-items: center;
  gap: 16px;
}
.picking a {
  color: #1677ff;
}
.link-icon {
  width: 26px;
  height: 26px;
  margin-top: 4px;
  color: #999;
}

/* Cards */
.card {
  margin-top: 32px;
  border: 2px solid #f0f0f0;
  border-radius: 16px;
}
h2 {
  height: 80px;
  padding: 0 24px;
  border-bottom: 2px solid #f0f0f0;
  font-size: 31px;
  font-weight: 600;
  line-height: 80px;
}
.videos-body {
  padding: 24px 24px 14px;
}
.empty {
  color: #999;
  line-height: 44px;
}
.collapse {
  display: flex;
  align-items: center;
  gap: 22px;
  width: 100%;
  margin-top: 10px;
  padding: 24px 22px;
}
.collapse .icon {
  width: 32px;
  height: 32px;
}
.history {
  padding: 24px 24px 42px;
}
.tabs {
  display: flex;
  gap: 64px;
  height: 80px;
  border-bottom: 2px solid #f0f0f0;
}
.tab {
  height: 80px;
}
.tab.active {
  border-bottom: 4px solid #4682b4;
  padding-top: 4px;
  color: #4682b4;
}
.timeline {
  margin: 14px 0 0;
  padding: 0;
  list-style: none;
}
.timeline li {
  display: flex;
  gap: 32px;
}
.rail {
  display: flex;
  flex-direction: column;
  align-items: center;
  width: 20px;
}
.dot {
  width: 20px;
  height: 20px;
  margin-top: 18px;
  border: 6px solid #4682b4;
  border-radius: 50%;
}
.tail {
  flex: 1;
  width: 4px;
  margin-bottom: -18px;
  background: #f0f0f0;
}
.timeline li:last-child .tail {
  display: none;
}
.entry {
  flex: 1;
  min-width: 0;
  padding-bottom: 32px;
}
h3 {
  font-size: 32px;
  font-weight: 700;
  line-height: 56px;
}
.by,
.time {
  font-size: 24px;
  line-height: 44px;
}
.by {
  color: #666;
}
.time {
  color: #999;
}
.fulfillment {
  display: flex;
  align-items: center;
  gap: 12px;
  height: 84px;
  margin: 12px 0 4px;
  padding: 0 16px;
  border: 2px solid #d9d9d9;
  border-radius: 8px;
  font-size: 24px;
}
.tag.created {
  border-color: #b7eb8f;
  background: #f6ffed;
  color: #52c41a;
  font-size: 22px;
}
.fulfillment strong {
  font-weight: 700;
}
.amount {
  color: #999;
}
</style>
